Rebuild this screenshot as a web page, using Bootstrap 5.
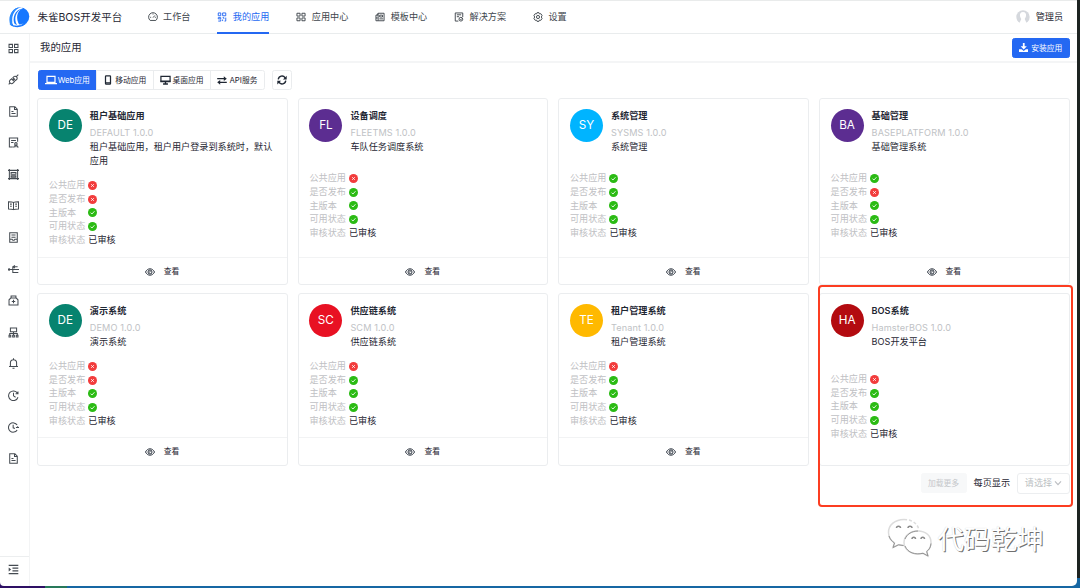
<!DOCTYPE html>
<html lang="zh-CN">
<head>
<meta charset="utf-8">
<meta name="viewport" content="width=device-width, initial-scale=1">
<title>朱雀BOS开发平台</title>
<link href="https://cdn.jsdelivr.net/npm/bootstrap@5.3.0/dist/css/bootstrap.min.css" rel="stylesheet">
<style>
  html, body { height: 588px; overflow: hidden; }
  body { font-family: Inter, "Noto Sans CJK SC", sans-serif; font-size: 9.15px; line-height: 13.75px; color: #1f2733; background: #1d2321; }
  svg { fill: none; stroke: currentColor; stroke-width: 1.5; flex: none; display: block; }
  .solid { fill: currentColor; stroke: none; }
  .desk { height: 588px; background: linear-gradient(90deg, #2e1064 45px, #28795a 45px 67px, #1767a3 67px) 0 100% / 100% 10px no-repeat; padding: 0 3px 2px 0; }
  .desk-win { background: #fff; border-top: 1px solid #e9ebeb; border-radius: 0 0 5px 4px; overflow: hidden; }
  .topbar { height: 33px; border-bottom: 1px solid #e9eced; padding: 0 14px 0 8px; flex: none; }
  .brand-name { font-size: 10.5px; margin-left: 7.5px; width: 110px; white-space: nowrap; padding-top: 1px; }
  .menu { gap: 26.8px; height: 33px; }
  .menu a { color: #40464d; text-decoration: none; gap: 5.6px; border-bottom: 2px solid transparent; border-top: 2px solid transparent; white-space: nowrap; }
  .menu a.on { color: #2468f2; border-bottom-color: #2468f2; }
  .side { width: 30px; border-right: 1px solid #f3f4f5; flex: none; color: #454b52; }
  .side-list { gap: 20.6px; padding: 8.5px 3px 0 0; }
  .side-end { height: 30px; border-top: 1px solid #eceeef; padding: 0 3px 4px 0; }
  .pagehead { height: 29px; border-bottom: 2px solid #f4f5f6; padding: 0 7.5px 0 10px; }
  .pagehead h1 { font-size: 10.4px; margin: 0; font-weight: 400; padding-top: 1px; }
  .btn-s { --bs-btn-font-size: 7.8px; --bs-btn-padding-x: 7.5px; --bs-btn-padding-y: 0; --bs-btn-border-radius: 2.5px; --bs-btn-color: #1f2733; --bs-btn-border-color: #eaecee; height: 20px; display: flex; align-items: center; justify-content: center; line-height: 12px; white-space: nowrap; }
  .btn-blue { --bs-btn-bg: #2468f2; --bs-btn-color: #fff; --bs-btn-border-color: #2468f2; }
  .install { width: 58px; padding: 0; gap: 3px; }
  .kinds { padding: 7px 7px 8px 7.5px; }
  .kinds .btn-group .btn { flex: none; padding: 0; }
  .w1 { width: 59.5px; gap: 1px; } .w2 { width: 58px; gap: 3.5px; } .w3 { width: 58px; gap: 1px; } .w4 { width: 55px; gap: 2px; } .w5 { width: 20px; }
  .apps { display: grid; grid-template-columns: repeat(4, 250.6px); column-gap: 10px; row-gap: 7.6px; grid-template-rows: 187.4px 172.6px; padding-left: 7.3px; }
  .app { border: 1px solid #ebedef; border-radius: 3px; display: flex; flex-direction: column; min-width: 0; }
  .app-main { padding: 10px 10.5px 0; flex: 1; min-height: 0; }
  .ava { width: 33px; height: 33px; border-radius: 50%; color: #fff; font-size: 11.7px; flex: none; }
  .app-name { font-weight: 600; line-height: 16px; margin-top: -1px; }
  .app-code { color: #c0c2c5; letter-spacing: .12px; line-height: 16px; white-space: nowrap; padding-top: 1px; margin-bottom: -1px; }
  .app-info { margin-left: 8px; height: 61.5px; }
  .app-desc { margin-top: -.3px; margin-right: -2px; }
  .gap-a { margin-top: 7.5px; } .gap-b { margin-top: .5px; } .gap-c { margin-top: -6.5px; } .gap-d { margin-top: 6.5px; }
  .fact { height: 13.75px; }
  .fact svg { margin-top: 1px; }
  .fact span:first-child { width: 39.5px; color: #bfc1c4; }
  .app-foot { height: 27.5px; border-top: 1px solid #f2f3f4; gap: 9px; font-size: 7.8px; padding: 1px 1px 0 0; }
  .pager { padding: 7px 7px 0 0; gap: 7px; }
  .more { width: 46px; --bs-btn-bg: #f7f8f9; --bs-btn-border-color: #f7f8f9; --bs-btn-color: #c5c7ca; padding: 0; }
  .pick { width: 53px; height: 21px; border: 1px solid #eceef0; border-radius: 3px; color: #bcbfc3; }
  .ring { position: absolute; left: 817.6px; top: 285px; width: 255.6px; height: 221.5px; border: 2px solid #fc3d21; border-radius: 4px; }
  .wm { position: absolute; left: 887px; top: 518px; gap: 5.5px; font-size: 26.6px; font-weight: 400; line-height: 42px; color: #fff; text-shadow: 1px 1px 0 #707070, 0 0 1px #ccc; white-space: nowrap; }
</style>
</head>
<body>
<svg width="0" height="0" class="position-absolute">
  <symbol id="grid" viewBox="0 0 16 16"><path d="M1.500 2h5v4.500h-5zM9.500 2h5v4.500h-5zM1.500 9.500h5V14h-5zM9.500 9.500h5V14h-5z"/></symbol>
  <symbol id="doc" viewBox="0 0 16 16"><path d="M2.500 1h7.500l3.500 3.500V15h-11zM9.500 1v4h4M5 8h3M5 11h6"/></symbol>
  <symbol id="yes" viewBox="0 0 16 16"><circle cx="8" cy="8" r="8" fill="#2bbb14" stroke="none"/><path d="M4.500 8.200l2.500 2.500 4.500-5" stroke="#fff" stroke-width="1.500"/></symbol>
  <symbol id="no" viewBox="0 0 16 16"><circle cx="8" cy="8" r="8" fill="#f23c3c" stroke="none"/><path d="M5.700 5.700l4.600 4.600M10.300 5.700l-4.600 4.600" stroke="#fff" stroke-width="1.600"/></symbol>
  <symbol id="eye" viewBox="0 0 16 16"><path d="M.8 8C4 1.200 12 1.200 15.200 8 12 14.800 4 14.800.8 8z"/><circle cx="8" cy="8" r="3.200"/><path d="M6.800 8.300a1.300 1.300 0 0 0 1.500-1.500"/></symbol>
</svg>

<div class="desk">
 <div class="desk-win d-flex flex-column h-100">
  <header class="topbar d-flex align-items-center">
    <svg width="22" height="22" viewBox="0 0 22 22" class="solid"><circle cx="12" cy="10.500" r="9.300" fill="#1677ff"/><path d="M11.500 1C4 2.500-1 11 2.500 19l3.500 2C2.500 14 4 5 11.500 1z" fill="#2a8bff"/><path d="M14.500 1.800C6 3 3 12 6.200 19.500" fill="none" stroke="#fff" stroke-width="1.500"/><path d="M14.500 2.500C8.500 5 7.500 13 11.500 19.300L9 19C5.500 13 7.500 5 14.500 2.500z" fill="#fff"/><path d="M1 17.500c5 3 12 3.300 18-1-4 5.500-13 6.500-18 1z" fill="#1677ff"/><path d="M4 17.800c4 1.500 9 1.500 13-.8-4 1.700-9 1.800-13 .8z" fill="#fff"/></svg>
    <span class="brand-name">朱雀BOS开发平台</span>
    <nav class="menu d-flex">
      <a class="d-flex align-items-center" href="#"><svg width="10" height="10" viewBox="0 0 16 16"><path d="M3.500 13.500a7 7 0 1 1 9 0zM8 9l3-3.500M3.500 8.500H5M8 2.500V4M11 8.500h1.500"/></svg>工作台</a>
      <a class="d-flex align-items-center on" href="#"><svg width="10" height="10" viewBox="0 0 16 16"><path d="M2 1.500h4V6H2zM9 1.500h5V6H9zM2 9h4v2H2zM2 14.500h4V12M9 9h2v2M14 9v5.500h-2M9 12v2.500"/></svg>我的应用</a>
      <a class="d-flex align-items-center" href="#"><svg width="10" height="10"><use href="#grid"/></svg>应用中心</a>
      <a class="d-flex align-items-center" href="#"><svg width="10" height="10" viewBox="0 0 16 16"><path d="M5 2h9.500v12H5zM5 5H1.500v9H5M7.500 5h4.500v3H7.500zM7 11h6M3 8v3M5 2L3 5"/></svg>模板中心</a>
      <a class="d-flex align-items-center" href="#"><svg width="10" height="10" viewBox="0 0 16 16"><path d="M7 14.500H2v-13h12V8M4.500 4.500h7M4.500 7.500H8"/><circle cx="11" cy="11.500" r="3"/><path d="M10 11.500l1 1 1.500-2"/></svg>解决方案</a>
      <a class="d-flex align-items-center" href="#"><svg width="10" height="10" viewBox="0 0 16 16"><path d="M6.500 1h3l.7 2 2.300-.3L14.500 5.500 13.300 8l1.200 2.500-2 2.800-2.300-.3-.7 2h-3l-.7-2-2.300.3-2-2.800L2.700 8 1.500 5.500l2-2.800 2.300.3z"/><circle cx="8" cy="8" r="2.500"/></svg>设置</a>
    </nav>
    <div class="d-flex align-items-center ms-auto" style="gap:6px">
      <svg width="14" height="14" viewBox="0 0 14 14" class="solid"><circle cx="7" cy="7" r="6.700" fill="#d5d8dd"/><path d="M7 2c-2.400 0-3.400 1.700-3 4 .2 1.500 1 2.200 1.300 3L3 14h8L8.700 9c.3-.8 1.100-1.500 1.300-3 .4-2.300-.6-4-3-4z" fill="#fff"/></svg>
      <span>管理员</span>
    </div>
  </header>

  <div class="d-flex flex-grow-1">
    <aside class="side d-flex flex-column">
      <div class="side-list d-flex flex-column align-items-center">
        <svg width="11" height="11"><use href="#grid"/></svg>
        <svg width="11" height="11" viewBox="0 0 16 16"><path d="M1 15l2.500-2.500M12.500 3.500L15 1M7 5.500l2-2a3 3 0 0 1 4 4l-2 2zM5.500 7l4 4-2 2a3 3 0 0 1-4.500-4zM6.500 9.500l3-3"/></svg>
        <svg width="11" height="11"><use href="#doc"/></svg>
        <svg width="11" height="11" viewBox="0 0 16 16"><path d="M7 14.500H2v-13h12V7M4.500 5h7M4.500 8H8"/><circle cx="11.500" cy="10" r="1.800"/><path d="M8.500 15.500c0-4 6-4 6 0M11.500 12v3"/></svg>
        <svg width="11" height="11" viewBox="0 0 16 16"><path d="M0 2h16M0 14h16M2 0v16M14 0v16M4.500 5h7v2.500h-7zM4.500 10h7v2h-7z"/></svg>
        <svg width="11" height="11" viewBox="0 0 16 16"><path d="M8 3.500v10M8 3.500C6 2.500 3 2.500.7 2.500v10.500c3 0 5 0 7.300 1 2.300-1 4.300-1 7.300-1V2.500C13 2.500 10 2.500 8 3.500zM3 6h2.500M3 9h2.500M10.500 6H13M10.500 9H13"/></svg>
        <svg width="11" height="11" viewBox="0 0 16 16"><path d="M2.500 1h11v14h-11zM5 4.500h6M5 7.500h6M2.500 10.500H6l1 1.500h2l1-1.500h3.500"/></svg>
        <svg width="11" height="11" viewBox="0 0 16 16"><path d="M3 8h13M7 8V4h7M7 8v4.500h8M10 2L7.500 4 10 6"/><circle cx="1.500" cy="8" r="1" fill="currentColor"/></svg>
        <svg width="11" height="11" viewBox="0 0 16 16"><path d="M1.500 14.500V7L4 4.500h8L14.500 7v7.500zM4.500 4V1.500h7V4M8 7v5M5.500 9.500h5"/></svg>
        <svg width="11" height="11" viewBox="0 0 16 16"><path d="M3.500 1.500h9v5.500h-9zM8 7v5M2.500 12V9.500h11V12M1.500 12H4v2.500H1.500zM6.800 12h2.500v2.500H6.800zM12 12h2.500v2.500H12z"/></svg>
        <svg width="11" height="11" viewBox="0 0 16 16"><path d="M1.500 12.500h13M3.500 12.500V7a4.500 4.500 0 0 1 9 0v5.500M8 .5v2M6.500 14.800h3"/></svg>
        <svg width="11" height="11" viewBox="0 0 16 16"><path d="M14.500 10.500a7 7 0 1 1-.8-6M14.500 2v3.500H11M8 4v4.500l3 2"/></svg>
        <svg width="11" height="11" viewBox="0 0 16 16"><path d="M13.300 11.500a6.800 6.800 0 1 1 0-7M7.500 4v4.500l2.500 1M11.500 8H16M14 6v2"/></svg>
        <svg width="11" height="11"><use href="#doc"/></svg>
      </div>
      <div class="side-end mt-auto d-flex align-items-center justify-content-center">
        <svg width="11" height="11" viewBox="0 0 16 16"><path d="M1 2h14M6.500 6H15M6.500 10H15M1 14h14"/><path d="M1 5.200L4.500 8 1 10.800z" fill="currentColor" stroke="none"/></svg>
      </div>
    </aside>

    <main class="flex-grow-1">
      <div class="pagehead d-flex align-items-center justify-content-between">
        <h1>我的应用</h1>
        <button class="btn btn-s btn-blue install"><svg class="solid" width="9.500" height="9.500" viewBox="0 0 16 16"><path d="M6.500 0h3v5.500h3.700L8 10.800 2.800 5.500h3.700zM0 10.500h4.500L8 13.500l3.500-3H16V16H0z"/></svg>安装应用</button>
      </div>
      <div class="kinds d-flex">
        <div class="btn-group">
          <button class="btn btn-s btn-blue w1"><svg width="12" height="10" viewBox="0 0 18 15"><path d="M3 2h12v9H3z" stroke-width="1.800"/><path d="M0 13h18" stroke-width="2"/></svg>Web应用</button>
          <button class="btn btn-s w2"><svg width="8" height="10" viewBox="0 0 12 16"><rect x="2" y="1.500" width="8" height="13" rx="1" stroke-width="2"/><path d="M2 12.500h8" stroke-width="2"/></svg>移动应用</button>
          <button class="btn btn-s w3"><svg width="11" height="10" viewBox="0 0 18 16"><path d="M1.500 2h15v8.500h-15z" stroke-width="2"/><path d="M1 10h16M9 10v4M5 14.500h8" stroke-width="2.300"/></svg>桌面应用</button>
          <button class="btn btn-s w4"><svg width="10" height="9" viewBox="0 0 16 15"><path d="M0 4.500h13M3 10.500h13" stroke-width="2"/><path class="solid" d="M11 .5l5 4-5 4zM5 6.500l-5 4 5 4z"/></svg>API服务</button>
        </div>
        <button class="btn btn-s w5 p-0" style="margin-left:6.500px"><svg width="10" height="10" viewBox="0 0 16 16"><path d="M2 7a6 6 0 0 1 11-2.500M14 9a6 6 0 0 1-11 2.500" stroke-width="2.200"/><path class="solid" d="M15.500 1v6h-6zM.5 15V9h6z"/></svg></button>
      </div>
      <div class="apps" id="apps"></div>
      <div class="pager d-flex justify-content-end align-items-center">
        <button class="btn btn-s more">加载更多</button>
        <span>每页显示</span>
        <div class="pick d-flex align-items-center justify-content-center gap-1">请选择<svg width="8" height="8" viewBox="0 0 12 12" style="margin-left:-2px"><path d="M1.500 3.500L6 8.500l4.500-5" stroke-width="1.800"/></svg></div>
      </div>
    </main>
  </div>
 </div>
</div>

<div class="ring"></div>
<div class="wm d-flex align-items-center">
  <svg width="45" height="42" viewBox="0 0 45 42" stroke-width="1"><g stroke="#dcdcdc" fill="#fff"><path d="M17 1.500C8 1.500 1.500 7 1.500 14.500c0 4.500 2 8 6 10.500L6 29.500l5.500-2.700c2 .6 4 .8 6 .7"/><path d="M17 1.500c8 0 14 4 15 11" stroke-dasharray="3 2"/><path d="M31 13c-8 0-14 5-14 11.500S23 36 31 36c2 0 3.500-.3 5-.7l5 2.700-1.300-4.500C43 31 44 28 44 24.500 44 18 39 13 31 13z"/></g><g stroke="#8a8a8a"><path d="M9.500 10c0-2.500 4-2.500 4 0M21 10c0-2.500 4-2.500 4 0M25 21c0-2.500 3.500-2.500 3.500 0M34 21c0-2.500 3.500-2.500 3.500 0"/><path d="M2 18c1 3 3 5.500 5.500 7L6 29.500l5.500-2.700 5 .7M18 28c3 7 10 9 18 7.300l5 2.700-1.300-4.500c2.500-2 4-4 4.300-8M18 21c2-5 7-8 13-8" stroke-width=".9"/></g></svg>
  <span>代码乾坤</span>
</div>

<script>
const apps = [
  ['DE', '#07836f', '租户基础应用', 'DEFAULT 1.0.0', '租户基础应用，租户用户登录到系统时，默认应用', '0011', 'a'],
  ['FL', '#5c2d91', '设备调度', 'FLEETMS 1.0.0', '车队任务调度系统', '0111', 'b'],
  ['SY', '#00b4ff', '系统管理', 'SYSMS 1.0.0', '系统管理', '1111', 'b'],
  ['BA', '#5c2d91', '基础管理', 'BASEPLATFORM 1.0.0', '基础管理系统', '1011', 'b'],
  ['DE', '#07836f', '演示系统', 'DEMO 1.0.0', '演示系统', '0011', 'c'],
  ['SC', '#e81123', '供应链系统', 'SCM 1.0.0', '供应链系统', '0111', 'c'],
  ['TE', '#ffb900', '租户管理系统', 'Tenant 1.0.0', '租户管理系统', '0111', 'c'],
  ['HA', '#b30b10', 'BOS系统', 'HamsterBOS 1.0.0', 'BOS开发平台', '0111', 'd']
];
const labels = ['公共应用', '是否发布', '主版本', '可用状态'];
document.getElementById('apps').innerHTML = apps.map(([ab, color, name, code, text, flags, gap]) => `
  <section class="app">
    <div class="app-main">
      <div class="d-flex">
        <div class="ava d-flex align-items-center justify-content-center" style="background:${color}">${ab}</div>
        <div class="app-info"><div class="app-name">${name}</div><div class="app-code">${code}</div><div class="app-desc">${text}</div></div>
      </div>
      <div class="gap-${gap}">
        ${labels.map((l, i) => `<div class="fact d-flex align-items-center"><span>${l}</span><svg width="9" height="9"><use href="#${flags[i] === '1' ? 'yes' : 'no'}"/></svg></div>`).join('')}
        <div class="fact d-flex align-items-center"><span>审核状态</span><span>已审核</span></div>
      </div>
    </div>
    ${gap === 'd' ? '' : '<div class="app-foot d-flex align-items-center justify-content-center"><svg width="10" height="10"><use href="#eye"/></svg>查看</div>'}
  </section>`).join('');
</script>
<script src="https://cdn.jsdelivr.net/npm/bootstrap@5.3.0/dist/js/bootstrap.bundle.min.js"></script>
</body>
</html>
